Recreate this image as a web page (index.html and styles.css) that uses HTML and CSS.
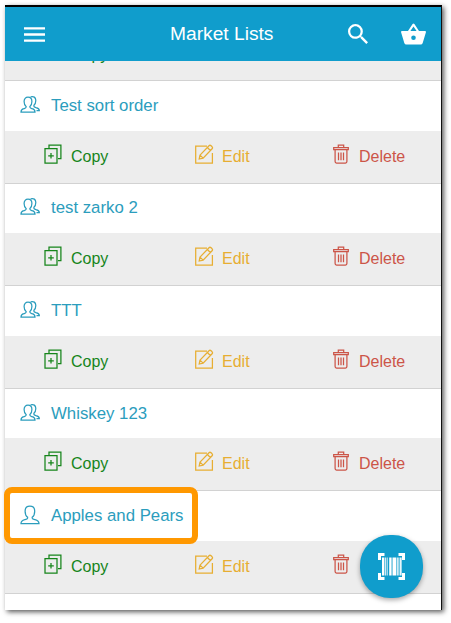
FILE: index.html
```
<!DOCTYPE html>
<html lang="en">
<head>
  <meta charset="UTF-8">
  <meta name="viewport" content="width=device-width, initial-scale=1.0">
  <title>Market Lists</title>
  <link rel="stylesheet" href="styles.css">
</head>
<body>

  <!-- Icon definitions -->
  <svg class="sprite" width="0" height="0" aria-hidden="true">
    <symbol id="user" viewBox="0 0 20 20">
      <path d="M7.6 13.2V12.2C5.8 11 5.1 8.9 5.1 6.2C5.1 3 7 1.2 9.9 1.2S14.7 3 14.7 6.2C14.7 8.9 14 11 12.2 12.2V13.2C12.4 14.2 13.6 14.4 15 14.7C17.8 15.4 19 16 19 18.5H1C1 16 2 15.4 4.8 14.7C6.2 14.4 7.4 14.2 7.6 13.2Z"/>
    </symbol>
    <symbol id="users" viewBox="0 0 20 20">
      <path d="M6.1 12.2V11.4C4.6 10.3 4.1 8.5 4.1 6.5C4.1 3.8 5.6 2.2 8 2.2S11.9 3.8 11.9 6.5C11.9 8.5 11.4 10.3 9.9 11.4V12.2C10.1 13.2 11 13.3 12.2 13.7C14.2 14.2 15 14.8 15 17.2H1C1 14.8 1.8 14.2 3.8 13.7C5 13.3 5.9 13.2 6.1 12.2Z"/>
      <path d="M10.6 1.9C13.6.8 15.8 2.4 15.8 5.5C15.8 7.6 15.2 9.3 13.9 10.3C13.6 11.9 14.6 12.3 16 12.7C18.3 13.3 19.3 13.8 19.3 15.6H16.5"/>
    </symbol>
    <symbol id="copy" viewBox="0 0 18 20">
      <path d="M1 4.5H13V19H1ZM5 4V1H16.9V14.7H14M7 9V14.6M4.2 11.8H9.8"/>
    </symbol>
    <symbol id="edit" viewBox="0 0 20 20">
      <path d="M13 2H1.7V19H18.4V9"/>
      <path d="M6 11.1L15 1.7Q16 .8 17.1 1.8L18.1 2.8Q19 3.8 18.1 4.8L9.1 14.1L5.2 15ZM6 11.1L9.1 14.1M13.3 3.5L16.4 6.5"/>
    </symbol>
    <symbol id="trash" viewBox="0 0 16 20">
      <path d="M.7 3.7H15.3V5.7H.7ZM5.3 3.5V1.2H10.7V3.5M2.1 6V17.6Q2.1 19 3.5 19H12.5Q13.9 19 13.9 17.6V6M5.5 8.6V16.3M8 8.6V16.3M10.5 8.6V16.3"/>
    </symbol>
  </svg>

  <div class="phone">
    <header class="topbar">
      <svg class="menu-icon" viewBox="0 0 21 15"><path d="M0 1.4H21M0 7.5H21M0 13.6H21"/></svg>
      <h1>Market Lists</h1>
      <svg class="search-icon" viewBox="3 3 17.5 17.5"><path d="M15.5 14h-.79l-.28-.27A6.47 6.47 0 0 0 16 9.5 6.5 6.5 0 1 0 9.5 16c1.61 0 3.09-.59 4.23-1.57l.27.28v.79l5 4.99L20.49 19l-4.99-5zm-6 0C7.01 14 5 11.99 5 9.5S7.01 5 9.5 5 14 7.01 14 9.5 11.99 14 9.5 14z"/></svg>
      <svg class="basket-icon" viewBox="0 0 25 22"><path fill-rule="evenodd" d="M18 8L13.4 1Q12.5 0 11.6 1L7 8H1Q0 8 0 9L3.3 20Q3.8 21.6 5.4 21.6H19.6Q21.2 21.6 21.7 20L25 9Q25 8 24 8ZM9.4 8L12.5 3.4L15.6 8ZM12.5 12.4A2.3 2.3 0 1 1 12.5 17A2.3 2.3 0 1 1 12.5 12.4Z"/></svg>
    </header>

    <main class="lists">
      <!-- Scrolled partly under the top bar -->
      <div class="actions clipped">
        <span class="action copy">Copy</span>
      </div>

      <section class="list">
        <h2 class="name"><svg><use href="#users"/></svg>Test sort order</h2>
        <div class="actions">
          <span class="action copy"><svg><use href="#copy"/></svg>Copy</span>
          <span class="action edit"><svg><use href="#edit"/></svg>Edit</span>
          <span class="action delete"><svg><use href="#trash"/></svg>Delete</span>
        </div>
      </section>

      <section class="list">
        <h2 class="name"><svg><use href="#users"/></svg>test zarko 2</h2>
        <div class="actions">
          <span class="action copy"><svg><use href="#copy"/></svg>Copy</span>
          <span class="action edit"><svg><use href="#edit"/></svg>Edit</span>
          <span class="action delete"><svg><use href="#trash"/></svg>Delete</span>
        </div>
      </section>

      <section class="list">
        <h2 class="name"><svg><use href="#users"/></svg>TTT</h2>
        <div class="actions">
          <span class="action copy"><svg><use href="#copy"/></svg>Copy</span>
          <span class="action edit"><svg><use href="#edit"/></svg>Edit</span>
          <span class="action delete"><svg><use href="#trash"/></svg>Delete</span>
        </div>
      </section>

      <section class="list">
        <h2 class="name"><svg><use href="#users"/></svg>Whiskey 123</h2>
        <div class="actions">
          <span class="action copy"><svg><use href="#copy"/></svg>Copy</span>
          <span class="action edit"><svg><use href="#edit"/></svg>Edit</span>
          <span class="action delete"><svg><use href="#trash"/></svg>Delete</span>
        </div>
      </section>

      <section class="list selected">
        <h2 class="name"><svg><use href="#user"/></svg>Apples and Pears</h2>
        <div class="actions">
          <span class="action copy"><svg><use href="#copy"/></svg>Copy</span>
          <span class="action edit"><svg><use href="#edit"/></svg>Edit</span>
          <span class="action delete"><svg><use href="#trash"/></svg></span>
        </div>
      </section>
    </main>

    <button class="scan" aria-label="Scan barcode">
      <svg viewBox="0 0 27 27">
        <path class="corners" d="M1.5 7V1.5H6.5M20.5 1.5H25.5V7M25.5 20V25.5H20.5M6.5 25.5H1.5V20"/>
        <path class="bars" d="M4 4.5h2.4v18H4zM7.1 4.5h.8v18h-.8zM8.7 4.5h.9v18h-.9zM11.2 4.5h2.4v18h-2.4zM14.5 4.5h3.7v18h-3.7zM18.8 4.5h1v18h-1zM20.4 4.5h1v18h-1zM22.1 4.5h1.5v18h-1.5z"/>
      </svg>
    </button>
  </div>

</body>
</html>
```
FILE: styles.css
```
:root {
  --blue: #109dcc;
  --link: #2b9dbd;
  --grey: #ededed;
  --line: #d2d2d2;
}
*, *::before {
  box-sizing: border-box;
}
body {
  margin: 0;
  padding: 5px;
  height: 623px;
  overflow: hidden;
  background: #fff;
  font-family: "Liberation Sans", Arial, sans-serif;
}
.sprite {
  position: absolute;
}
.phone {
  position: relative;
  width: 437px;
  height: 605px;
  background: #fff;
  border-top: 2px solid #000;
  border-right: 1px solid #111;
  box-shadow: 2px 2px 5px rgba(0, 0, 0, 0.65);
}
svg {
  display: block;
  flex: none;
}

/* Top bar */
.topbar {
  display: grid;
  grid-template-columns: 146px 178px 53px 1fr;
  align-items: center;
  height: 54px;
  padding-left: 19px;
  background: var(--blue);
}
.topbar h1 {
  margin: 0;
  font-size: 19.2px;
  font-weight: 400;
  line-height: 24px;
  color: #fff;
}
.menu-icon {
  width: 21px;
  height: 15px;
  stroke: #fff;
  stroke-width: 2.4;
}
.search-icon {
  width: 20px;
  height: 20px;
  fill: #fff;
}
.basket-icon {
  width: 25px;
  height: 22px;
  fill: #fff;
}

/* Lists */
.lists {
  height: 549px;
}
.name {
  display: flex;
  align-items: center;
  gap: 11px;
  height: 49.6px;
  margin: 0;
  padding-left: 15px;
  font-size: 16.8px;
  font-weight: 400;
  color: var(--link);
}
.name svg {
  width: 20px;
  height: 20px;
  margin-bottom: 2px;
}
.actions {
  display: grid;
  grid-template-columns: 150px 138px 1fr;
  align-items: center;
  height: 53px;
  padding-left: 39px;
  background: var(--grey);
  border-bottom: 1px solid var(--line);
}
.clipped {
  align-items: start;
  height: 20px;
  padding-left: 66px;
  overflow: hidden;
}
.clipped .action {
  margin-top: -16px;
}
.action {
  display: flex;
  align-items: center;
  font-size: 16px;
  line-height: 20px;
}
.action svg,
.name svg {
  fill: none;
  stroke: currentColor;
  stroke-width: 1.25;
}
.action svg {
  height: 20px;
  margin-bottom: 6px;
}
.copy {
  color: #16851b;
}
.copy svg {
  width: 18px;
  margin-right: 9px;
}
.edit {
  color: #e7ae32;
}
.edit svg {
  width: 20px;
  margin-right: 8px;
}
.delete {
  padding-left: 1px;
  color: #cc5548;
}
.delete svg {
  width: 16px;
  margin-right: 10px;
}

/* Highlight frame round the current list name */
.selected {
  position: relative;
}
.selected::before {
  content: "";
  position: absolute;
  left: -1px;
  top: -4px;
  width: 194px;
  height: 57px;
  border: 6px solid #ff9800;
  border-radius: 8px;
}

/* Floating scan button */
.scan {
  position: absolute;
  right: 18px;
  bottom: 12px;
  display: flex;
  align-items: center;
  justify-content: center;
  width: 63px;
  height: 63px;
  padding: 0;
  border: 0;
  border-radius: 30px;
  background: var(--blue);
  box-shadow: 0 2px 5px rgba(0, 0, 0, 0.35);
}
.scan svg {
  width: 27px;
  height: 27px;
}
.corners {
  fill: none;
  stroke: #fff;
  stroke-width: 3;
}
.bars {
  fill: #fff;
}
```
